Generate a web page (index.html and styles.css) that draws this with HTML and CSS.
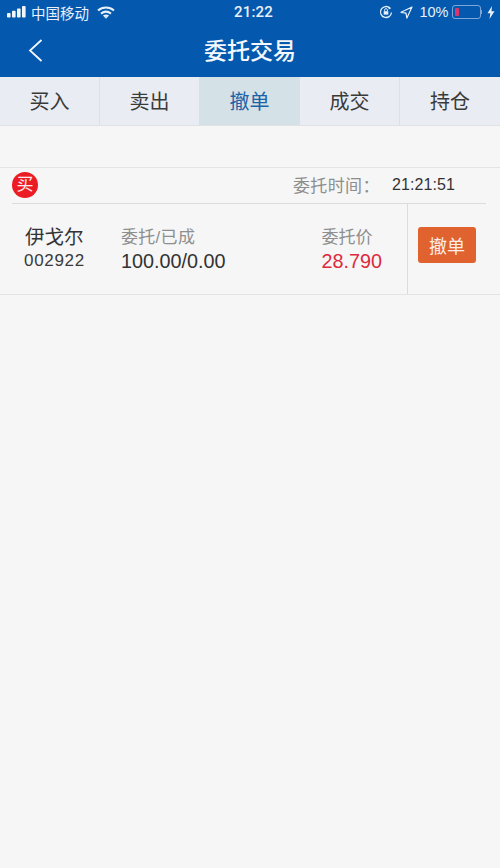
FILE: index.html
```html
<!DOCTYPE html>
<html lang="zh-CN">
<head>
<meta charset="utf-8">
<title>委托交易</title>
<link rel="stylesheet" href="styles.css">
</head>
<body>
<header class="head">
  <div class="status">
    <div class="status-left">
      <svg class="signal" width="20" height="12" viewBox="0 0 20 12"><rect x="0" y="7" width="3.600" height="4.500" rx=".8"/><rect x="5" y="4.800" width="3.600" height="6.700" rx=".8"/><rect x="10" y="2.400" width="3.600" height="9.100" rx=".8"/><rect x="15" y="0" width="3.600" height="11.500" rx=".8"/></svg>
      <span class="carrier">中国移动</span>
      <svg class="wifi" width="18" height="13" viewBox="0 0 18 13" fill="none" stroke="#e8f0fa" stroke-width="2"><path d="M1 4.600C5.600.6 12.400.6 17 4.600"/><path d="M4 7.600c3-2.400 7-2.400 10 0"/><path d="M6.600 10.200c1.500-1 3.300-1 4.800 0"/><circle cx="9" cy="11.300" r=".8" fill="#e8f0fa" stroke-width="1"/></svg>
    </div>
    <span class="clock">21:22</span>
    <div class="status-right">
      <svg width="14" height="14" viewBox="0 0 14 14" fill="none" stroke="#e8f0fa"><path d="M12.500 7.500A5.500 5.500 0 1 1 10.800 3" stroke-width="1.300"/><path d="M9.800 1.500l2.400 1.800-2.600 1.300z" fill="#e8f0fa" stroke="none"/><rect x="4.700" y="6.200" width="4.600" height="3.400" fill="#e8f0fa" stroke="none"/><path d="M5.600 6.200V5a1.400 1.400 0 0 1 2.800 0v1.200" stroke-width=".9"/></svg>
      <svg class="arrow" width="13" height="13" viewBox="0 0 13 13" fill="none" stroke="#e8f0fa" stroke-width="1.200"><path d="M12 1L1 6.300l5 .8.900 5z" stroke-linejoin="round"/></svg>
      <span class="pct">10%</span>
      <div class="battery"><div class="level"></div></div>
      <div class="nub"></div>
      <svg width="8" height="13" viewBox="0 0 8 13"><path d="M5 0L.5 7.300h2.800L2.500 13 7.500 5.300H4.500z" fill="#e8f0fa"/></svg>
    </div>
  </div>
  <div class="navbar">
    <svg class="back" width="15" height="23" viewBox="0 0 15 23" fill="none" stroke="#f2f6fb" stroke-width="1.800"><path d="M13.500 1L2 11.500 13.500 22"/></svg>
    <h1 class="title">委托交易</h1>
  </div>
</header>
<nav class="tabs">
  <div class="tab">买入</div>
  <div class="tab">卖出</div>
  <div class="tab active">撤单</div>
  <div class="tab">成交</div>
  <div class="tab">持仓</div>
</nav>
<div class="gap"></div>
<section class="order">
  <div class="order-top">
    <span class="badge">买</span>
    <span class="time-label">委托时间：</span>
    <span class="time">21:21:51</span>
  </div>
  <div class="order-body">
    <div class="info">
      <div class="stock">
        <div class="stock-name">伊戈尔</div>
        <div class="stock-code">002922</div>
      </div>
      <div class="qty">
        <div class="label">委托/已成</div>
        <div class="value">100.00/0.00</div>
      </div>
      <div class="price">
        <div class="label">委托价</div>
        <div class="value red">28.790</div>
      </div>
    </div>
    <div class="action"><button class="cancel">撤单</button></div>
  </div>
</section>
</body>
</html>
```
FILE: styles.css
```css
* { box-sizing: border-box; }
html, body { margin: 0; padding: 0; }
body {
  width: 500px;
  height: 868px;
  overflow: hidden;
  background: #f6f6f6;
  font-family: "Liberation Sans", "Noto Sans CJK SC", sans-serif;
  color: #333;
}
.head { background: #0459ae; height: 77px; color: #e8f0fa; }
.status {
  height: 25px;
  display: flex;
  align-items: center;
  justify-content: space-between;
  position: relative;
  padding: 0 5px 1px 7px;
}
.status-left, .status-right { display: flex; align-items: center; }
.signal { fill: #f2f6fb; margin-right: 4px; }
.carrier { font-size: 14.500px; }
.wifi { margin-left: 8px; }
.clock {
  position: absolute;
  left: 234px;
  top: 3px;
  font-family: Roboto, "Liberation Sans", sans-serif;
  font-size: 15px;
  font-weight: 500;
  letter-spacing: .2px;
  line-height: 19px;
}
.arrow { margin-left: 7px; }
.pct { font-size: 14.500px; margin-left: 6px; }
.battery {
  width: 29px;
  height: 14px;
  margin-left: 3px;
  border: 1px solid #7ea6d8;
  border-radius: 3px;
  padding: 2px;
}
.level { width: 4px; height: 100%; background: #d8356a; border-radius: 1px; }
.nub { width: 1.500px; height: 4px; background: #7ea6d8; margin-right: 5px; }
.navbar {
  height: 52px;
  display: flex;
  align-items: center;
  justify-content: center;
  position: relative;
}
.back { position: absolute; left: 28px; top: 14px; }
.title {
  margin: 0 0 4px;
  font-size: 23px;
  font-weight: 500;
  color: #f4f7fb;
}
.tabs { display: flex; height: 49px; background: #e9edf3; border-bottom: 1px solid #dfe3e6; }
.tab {
  width: 100px;
  display: flex;
  align-items: center;
  justify-content: center;
  font-size: 20px;
  padding-bottom: 1px;
  color: #3a3a3a;
  border-right: 1px solid #dde1e6;
}
.tab:nth-child(2) { width: 99px; border-right: 0; }
.tab:nth-child(3) { width: 101px; }
.tab:last-child { border-right: 0; }
.tab.active { background: #d4e1e6; color: #1c63a8; border-right: 0; }
.gap { height: 41px; }
.order { border-top: 1px solid #e4e4e4; border-bottom: 1px solid #e4e4e4; }
.order-top {
  height: 36px;
  margin: 0 14px 0 12px;
  display: flex;
  align-items: center;
  border-bottom: 1px solid #dcdcdc;
  padding-bottom: 2px;
}
.badge {
  width: 26px;
  height: 26px;
  border-radius: 50%;
  background: #ec1c24;
  color: #fbe9e9;
  font-size: 17px;
  line-height: 26px;
  text-align: center;
}
.time-label { margin-left: auto; font-size: 17px; color: #8e8e8e; letter-spacing: .4px; }
.time { margin: 1px 31px 0 12px; font-size: 16px; color: #333; letter-spacing: .1px; }
.order-body { display: flex; height: 90px; }
.info { flex: 1; display: flex; padding: 21px 25px 0 24px; }
.stock { width: 97px; }
.stock-name { font-size: 19.500px; line-height: 25px; padding-left: 1px; color: #333; }
.stock-code { font-size: 17px; line-height: 21px; letter-spacing: .7px; color: #3a3a3a; }
.qty { flex: 1; }
.price { text-align: right; }
.label { font-size: 17px; line-height: 25px; color: #8f8f8f; letter-spacing: .3px; }
.price .label { text-align: left; letter-spacing: 0; }
.value { font-size: 19.800px; line-height: 23px; color: #333; }
.value.red { color: #dd2a3c; }
.action { width: 93px; border-left: 1px solid #dcdcdc; padding: 23px 0 0 10px; }
.cancel {
  display: block;
  width: 58px;
  height: 36px;
  padding: 0;
  border: 0;
  border-radius: 3px;
  background: #e0622f;
  color: #fbeee8;
  font-family: inherit;
  font-size: 18px;
}
```
